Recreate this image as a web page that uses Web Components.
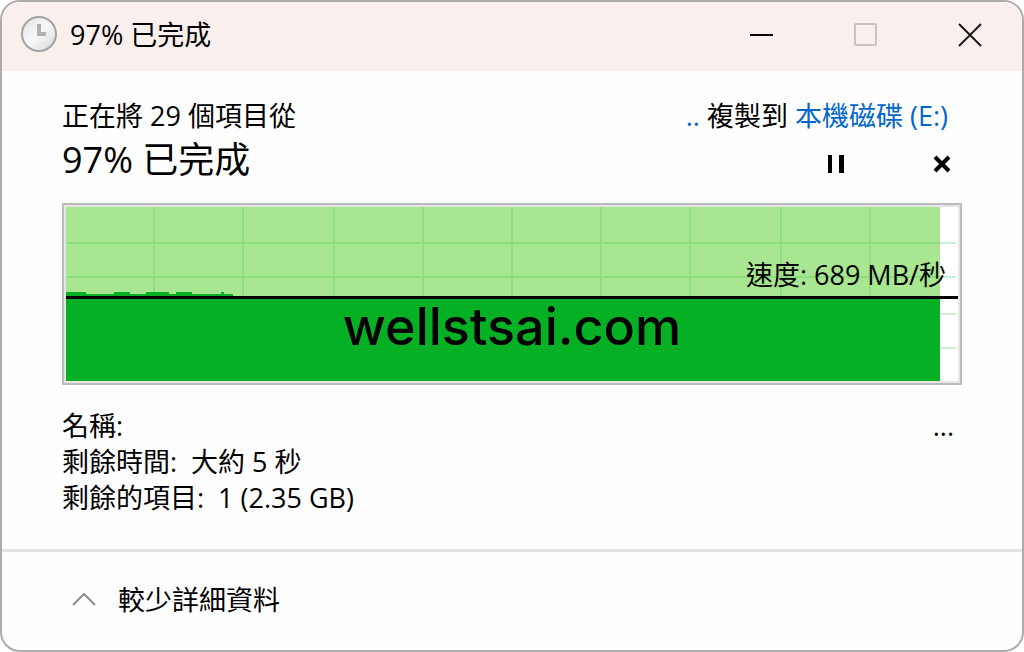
<!DOCTYPE html>
<html lang="zh-Hant">
<head>
<meta charset="utf-8">
<meta name="viewport" content="width=device-width, initial-scale=1">
<title>97% 已完成</title>
<style>
html, body { margin: 0; background: #fff; }
body {
  min-height: 100vh; display: flex; color: #000;
  font: 27px/36px "Open Sans", "Noto Sans CJK TC", sans-serif;
}
</style>
</head>
<body>
<copy-window>
  <title-bar slot="title">97% 已完成</title-bar>
  <transfer-summary></transfer-summary>
  <speed-chart speed="速度: 689 MB/秒">wellstsai.com</speed-chart>
  <transfer-details></transfer-details>
  <details-toggle slot="footer">較少詳細資料</details-toggle>
</copy-window>
<script>
const define = (name, markup, setup) => {
  const template = document.createElement('template');
  template.innerHTML = markup;
  customElements.define(name, class extends HTMLElement {
    constructor() {
      super();
      this.attachShadow({ mode: 'open' }).append(template.content.cloneNode(true));
    }
    connectedCallback() { if (setup) setup(this); }
  });
};

define('copy-window', `
<style>
:host { flex: 1; display: flex; flex-direction: column; box-sizing: border-box;
  border: 2px solid #acacac; border-radius: 20px; overflow: hidden; background: #fefefe; }
main { flex: 1; padding: 27px 60px 32px; }
footer { border-top: 3px solid #e1e1e1; padding: 24px 60px 26px; }
</style>
<slot name="title"></slot>
<main><slot></slot></main>
<footer><slot name="footer"></slot></footer>`);

define('title-bar', `
<style>
:host { display: block; background: #f9f0ed; }
header { display: flex; align-items: center; height: 69px; padding: 0 28px 4px 18px; box-sizing: border-box; }
h1 { flex: 1; margin: 0 0 0 12px; font: inherit; }
.controls { display: flex; gap: 56px; }
button { width: 48px; height: 48px; padding: 0; border: 0; background: none; display: grid; place-items: center; color: #000; }
svg { display: block; }
</style>
<header>
  <svg width="38" height="38" viewBox="0 0 38 38" aria-hidden="true">
    <defs><linearGradient id="face" x1="0" y1="0" x2="1" y2="1"><stop offset="0" stop-color="#e2e2e2"/><stop offset=".5" stop-color="#f8f8f8"/><stop offset="1" stop-color="#d6d6d6"/></linearGradient></defs>
    <circle cx="19" cy="18" r="17" fill="url(#face)" stroke="#a3a3a3" stroke-width="2"/>
    <path d="M19 8v10h7" fill="none" stroke="#b0b0b0" stroke-width="4"/>
  </svg>
  <h1><slot></slot></h1>
  <div class="controls">
    <button aria-label="最小化"><svg width="24" height="24"><path d="M0 12h23" stroke="#000" stroke-width="2"/></svg></button>
    <button aria-label="最大化" disabled><svg width="24" height="24"><rect x="1" y="1" width="21" height="21" rx="1" fill="none" stroke="#c8c2c0" stroke-width="2"/></svg></button>
    <button aria-label="關閉"><svg width="24" height="24"><path d="M1 1l22 22M23 1L1 23" stroke="#1a1a1a" stroke-width="2"/></svg></button>
  </div>
</header>`);

define('transfer-summary', `
<style>
:host { display: block; }
.row { display: flex; justify-content: space-between; align-items: center; }
p, h2 { margin: 0; }
.route { padding-right: 14px; }
.route p { white-space: pre; }
a { color: #0066cc; text-decoration: none; }
h2 { font-size: 36px; line-height: 52px; font-weight: 400; }
.actions { display: flex; gap: 78px; padding: 8px 6px 0 0; }
button { width: 28px; height: 28px; padding: 0; border: 0; background: none; display: grid; place-items: center; }
svg { display: block; }
</style>
<div class="row route"><p>正在將 29 個項目從</p><p><a href="#source">..</a> 複製到 <a href="#target">本機磁碟 (E:)</a></p></div>
<div class="row"><h2>97% 已完成</h2>
  <div class="actions">
    <button aria-label="暫停"><svg width="18" height="18"><path d="M1 0h4v18H1zM12 0h5v18h-5z"/></svg></button>
    <button aria-label="取消"><svg width="18" height="18"><path d="M2 2l14 14M16 2L2 16" stroke="#000" stroke-width="4"/></svg></button>
  </div>
</div>`);

define('speed-chart', `
<style>
:host { display: block; position: relative; margin-top: 17px; border: 2px solid #bbb; background: #fff; }
svg { display: block; width: 100%; height: 178px; box-sizing: border-box; border: 2px solid #e5e5e5; }
output { position: absolute; right: 14px; top: 52px; }
.mark { position: absolute; left: 0; right: 0; top: 94px; text-align: center; font: 500 52px/56px Inter, sans-serif; }
</style>
<svg viewBox="0 0 892 174" preserveAspectRatio="none" shape-rendering="crispEdges" aria-hidden="true">
  <path d="M874 36h16M874 70h16M874 107h16M874 141h16" stroke="#cdf0d5" stroke-width="2"/>
  <path d="M0 0h874v174H0z" fill="#a8e692"/>
  <path d="M88 0v90M177 0v90M268 0v90M357 0v90M446 0v90M535 0v90M624 0v90M715 0v90M804 0v90M0 36h874M0 70h874" stroke="#8fde7d" stroke-width="2"/>
  <path d="M0 85h20v2h28v-2h16v2h16v-2h23v2h7v-2h16v2h29v-2h3v2h9v3h707v84H0z" fill="#06b025"/>
  <path d="M0 89h892v3H0z"/>
</svg>
<output></output>
<div class="mark"><slot></slot></div>`,
el => { el.shadowRoot.querySelector('output').textContent = el.getAttribute('speed'); });

define('transfer-details', `
<style>
:host { display: block; margin-top: 23px; }
dl { margin: 0; }
div { display: flex; gap: 14px; }
dt, dd { margin: 0; }
.name dd { margin-left: auto; padding-right: 8px; }
</style>
<dl>
  <div class="name"><dt>名稱:</dt><dd>...</dd></div>
  <div><dt>剩餘時間:</dt><dd>大約 5 秒</dd></div>
  <div><dt>剩餘的項目:</dt><dd>1 (2.35 GB)</dd></div>
</dl>`);

define('details-toggle', `
<style>
:host { display: block; }
button { display: flex; align-items: center; gap: 22px; padding: 6px 10px; border: 0; background: none; font: inherit; color: inherit; }
svg { display: block; }
</style>
<button aria-expanded="true"><svg width="24" height="14" aria-hidden="true"><path d="M1 12L12 1l11 11" fill="none" stroke="#8c8c8c" stroke-width="2"/></svg><slot></slot></button>`);
</script>
</body>
</html>
